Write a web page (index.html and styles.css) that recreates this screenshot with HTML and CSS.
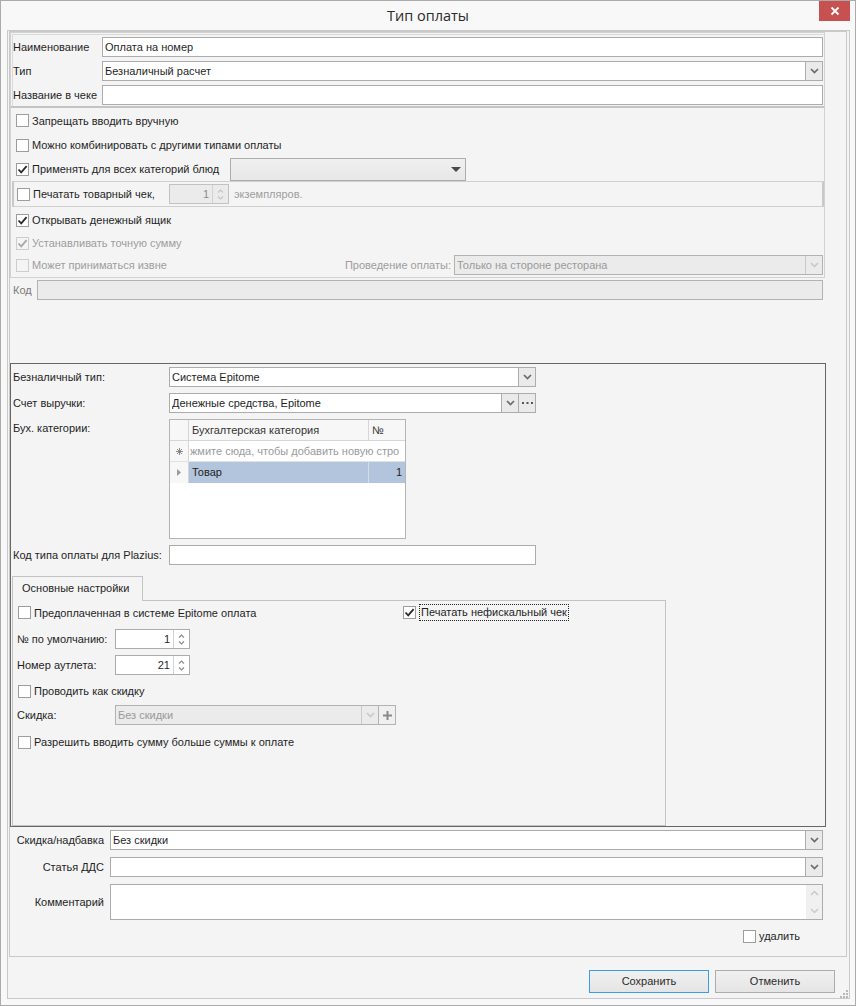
FILE: index.html
```html
<!DOCTYPE html>
<html lang="ru">
<head>
<meta charset="utf-8">
<title>Тип оплаты</title>
<link rel="stylesheet" href="styles.css">
</head>
<body>
<div class="window">
  <div class="titlebar">
    <div class="title">Тип оплаты</div>
    <div class="close"><svg width="10" height="10" viewBox="0 0 10 10"><path d="M1.5 1.5L8.5 8.5M8.5 1.5L1.5 8.5" stroke="#fff" stroke-width="1.8"/></svg></div>
  </div>
  <div class="frame">
    <div class="scroll">
      <div class="grpA">
        <div class="frow"><span class="flabel">Наименование</span><div class="input w721"><span>Оплата на номер</span></div></div>
        <div class="frow"><span class="flabel">Тип</span><div class="input combo w721"><span class="val">Безналичный расчет</span><span class="dd"><svg width="9" height="6" viewBox="0 0 9 6"><path d="M1 1l3.5 3.5L8 1" fill="none" stroke="#6a6a6a" stroke-width="1.7"/></svg></span></div></div>
        <div class="frow"><span class="flabel">Название в чеке</span><div class="input w721"></div></div>
      </div>

      <div class="grpB">
        <div class="crow h25"><span class="cb"></span><span class="ctext">Запрещать вводить вручную</span></div>
        <div class="crow h24"><span class="cb"></span><span class="ctext">Можно комбинировать с другими типами оплаты</span></div>
        <div class="crow h24"><span class="cb"><svg width="11" height="11" viewBox="0 0 11 11"><path d="M1.5 5.5L4.2 8.3L9.6 2.2" fill="none" stroke="#2a2a2a" stroke-width="1.8"/></svg></span><span class="ctext lbl198">Применять для всех категорий блюд</span><div class="flatcombo"><svg width="10" height="5" viewBox="0 0 10 5"><path d="M0 0H10L5 5Z" fill="#4a4a4a"/></svg></div></div>
        <div class="printbox">
          <span class="cb"></span><span class="ctext lbl136">Печатать товарный чек,</span>
          <div class="spin dis w60"><span class="spinval">1</span><span class="spinbtn"><svg width="7" height="4" viewBox="0 0 7 4"><path d="M1 3.5L3.5 1L6 3.5" fill="none" stroke="#c4c4c4" stroke-width="1.2"/></svg><svg width="7" height="4" viewBox="0 0 7 4"><path d="M1 0.5L3.5 3L6 0.5" fill="none" stroke="#c4c4c4" stroke-width="1.2"/></svg></span></div>
          <span class="gray ml5">экземпляров.</span>
        </div>
        <div class="crow h26"><span class="cb"><svg width="11" height="11" viewBox="0 0 11 11"><path d="M1.5 5.5L4.2 8.3L9.6 2.2" fill="none" stroke="#2a2a2a" stroke-width="1.8"/></svg></span><span class="ctext">Открывать денежный ящик</span></div>
        <div class="crow h20"><span class="cb dis"><svg width="11" height="11" viewBox="0 0 11 11"><path d="M1.5 5.5L4.2 8.3L9.6 2.2" fill="none" stroke="#a8a8a8" stroke-width="1.8"/></svg></span><span class="ctext gray">Устанавливать точную сумму</span></div>
        <div class="crow h24 pr1"><span class="cb dis"></span><span class="ctext gray">Может приниматься извне</span>
          <div class="rightpart"><span class="gray">Проведение оплаты:</span><div class="input combo dis w369"><span class="val">Только на стороне ресторана</span><span class="dd"><svg width="9" height="6" viewBox="0 0 9 6"><path d="M1 1l3.5 3.5L8 1" fill="none" stroke="#cacaca" stroke-width="1.7"/></svg></span></div></div>
        </div>
      </div>

      <div class="coderow"><span class="codelabel">Код</span><div class="input dis w786"></div></div>

      <div class="grpC">
        <div class="frowC mt3"><span class="clabel">Безналичный тип:</span><div class="input combo w367"><span class="val">Система Epitome</span><span class="dd"><svg width="9" height="6" viewBox="0 0 9 6"><path d="M1 1l3.5 3.5L8 1" fill="none" stroke="#6a6a6a" stroke-width="1.7"/></svg></span></div></div>
        <div class="frowC mt6"><span class="clabel">Счет выручки:</span><div class="input combo w367"><span class="val">Денежные средства, Epitome</span><span class="dd"><svg width="9" height="6" viewBox="0 0 9 6"><path d="M1 1l3.5 3.5L8 1" fill="none" stroke="#6a6a6a" stroke-width="1.7"/></svg></span><span class="dd2"><svg width="11" height="3" viewBox="0 0 11 3"><rect x="0" y="0" width="2" height="2" fill="#555"/><rect x="4.5" y="0" width="2" height="2" fill="#555"/><rect x="9" y="0" width="2" height="2" fill="#555"/></svg></span></div></div>
        <div class="gridrow mt6"><span class="clabel top">Бух. категории:</span>
          <div class="grid">
            <div class="grow ghead"><span class="rh"></span><span class="c1">Бухгалтерская категория</span><span class="c2">№</span></div>
            <div class="grow gnew"><span class="rh"><svg width="7" height="7" viewBox="0 0 7 7"><path d="M3.5 0V7M0 3.5H7M1 1L6 6M6 1L1 6" stroke="#8a8a8a" stroke-width="1"/></svg></span><span class="cnew">жмите сюда, чтобы добавить новую стро</span></div>
            <div class="grow gsel"><span class="rh"><svg width="4" height="7" viewBox="0 0 4 7"><path d="M0 0L4 3.5L0 7Z" fill="#9a9a9a"/></svg></span><span class="c1">Товар</span><span class="c2 num">1</span></div>
          </div>
        </div>
        <div class="frowC mt6"><span class="clabel">Код типа оплаты для Plazius:</span><div class="input w367"></div></div>

        <div class="tabs"><div class="tab">Основные настройки</div></div>
        <div class="tabpanel">
          <div class="prow mt3">
            <div class="pleft"><span class="cb"></span><span class="ctext">Предоплаченная в системе Epitome оплата</span></div>
            <span class="cb"><svg width="11" height="11" viewBox="0 0 11 11"><path d="M1.5 5.5L4.2 8.3L9.6 2.2" fill="none" stroke="#2a2a2a" stroke-width="1.8"/></svg></span><span class="focus">Печатать нефискальный чек</span>
          </div>
          <div class="lrow mt8"><span class="plabel">№ по умолчанию:</span>
            <div class="spin w75"><span class="spinval">1</span><span class="spinbtn"><svg width="7" height="4" viewBox="0 0 7 4"><path d="M1 3.5L3.5 1L6 3.5" fill="none" stroke="#8c8c8c" stroke-width="1.2"/></svg><svg width="7" height="4" viewBox="0 0 7 4"><path d="M1 0.5L3.5 3L6 0.5" fill="none" stroke="#8c8c8c" stroke-width="1.2"/></svg></span></div>
          </div>
          <div class="lrow mt6"><span class="plabel">Номер аутлета:</span>
            <div class="spin w75"><span class="spinval">21</span><span class="spinbtn"><svg width="7" height="4" viewBox="0 0 7 4"><path d="M1 3.5L3.5 1L6 3.5" fill="none" stroke="#8c8c8c" stroke-width="1.2"/></svg><svg width="7" height="4" viewBox="0 0 7 4"><path d="M1 0.5L3.5 3L6 0.5" fill="none" stroke="#8c8c8c" stroke-width="1.2"/></svg></span></div>
          </div>
          <div class="cbrow mt6"><span class="cb"></span><span class="ctext">Проводить как скидку</span></div>
          <div class="lrow mt4"><span class="plabel">Скидка:</span>
            <div class="input combo dis w281"><span class="val">Без скидки</span><span class="dd"><svg width="9" height="6" viewBox="0 0 9 6"><path d="M1 1l3.5 3.5L8 1" fill="none" stroke="#cacaca" stroke-width="1.7"/></svg></span><span class="dd2"><svg width="9" height="9" viewBox="0 0 9 9"><path d="M4.5 0V9M0 4.5H9" stroke="#8a8a8a" stroke-width="2"/></svg></span></div>
          </div>
          <div class="cbrow mt7"><span class="cb"></span><span class="ctext">Разрешить вводить сумму больше суммы к оплате</span></div>
        </div>
      </div>

      <div class="bottom">
        <div class="brow"><span class="blabel">Скидка/надбавка</span><div class="input combo w713"><span class="val">Без скидки</span><span class="dd"><svg width="9" height="6" viewBox="0 0 9 6"><path d="M1 1l3.5 3.5L8 1" fill="none" stroke="#6a6a6a" stroke-width="1.7"/></svg></span></div></div>
        <div class="brow mt7"><span class="blabel">Статья ДДС</span><div class="input combo w713"><span class="val"></span><span class="dd"><svg width="9" height="6" viewBox="0 0 9 6"><path d="M1 1l3.5 3.5L8 1" fill="none" stroke="#6a6a6a" stroke-width="1.7"/></svg></span></div></div>
        <div class="brow mt7"><span class="blabel">Комментарий</span><div class="memo w713"><span class="memobar"><svg width="9" height="6" viewBox="0 0 9 6"><path d="M1 5l3.5-3.5L8 5" fill="none" stroke="#c8c8c8" stroke-width="1.4"/></svg><svg width="9" height="6" viewBox="0 0 9 6"><path d="M1 1l3.5 3.5L8 1" fill="none" stroke="#c8c8c8" stroke-width="1.4"/></svg></span></div></div>
        <div class="delrow"><span class="cb"></span><span class="ctext">удалить</span></div>
      </div>
    </div>
    <div class="buttons">
      <div class="btn default">Сохранить</div>
      <div class="btn">Отменить</div>
    </div>
    <div class="grip"><svg width="9" height="9" viewBox="0 0 9 9"><rect x="7" y="1" width="2" height="2" fill="#b8b8b8"/><rect x="4" y="4" width="2" height="2" fill="#b8b8b8"/><rect x="7" y="4" width="2" height="2" fill="#b8b8b8"/><rect x="1" y="7" width="2" height="2" fill="#b8b8b8"/><rect x="4" y="7" width="2" height="2" fill="#b8b8b8"/><rect x="7" y="7" width="2" height="2" fill="#b8b8b8"/></svg></div>
  </div>
</div>
</body>
</html>
```

FILE: styles.css
```css
* { box-sizing: border-box; }
html, body { margin: 0; padding: 0; }
body {
  width: 856px; height: 1006px; overflow: hidden;
  background: #f7f7f7;
  font-family: "Liberation Sans", Arial, sans-serif;
  font-size: 11px; color: #1f1f1f;
}
.window {
  width: 856px; height: 1006px;
  border: 1px solid #ababab;
  background: #f8f8f8;
  display: flex; flex-direction: column;
}
.titlebar { height: 29px; flex: none; display: grid; grid-template-columns: 1fr auto 1fr; }
.title {
  grid-column: 2;
  font-family: "Open Sans", "Noto Sans", sans-serif;
  font-size: 14.5px; line-height: 30px; color: #2b2b2b;
}
.close {
  grid-column: 3; justify-self: end;
  width: 31px; height: 20px; margin-right: 5px;
  background: #c75050;
  display: flex; align-items: center; justify-content: center;
}
.frame {
  position: relative;
  margin-left: 6px; width: 843px; height: 969px; flex: none;
  border: 1px solid #c9c9c9; background: #f4f4f4;
  display: flex; flex-direction: column;
}
.scroll {
  margin-left: 1px; width: 838px; height: 926px; flex: none;
  border: 1px solid #c9c9c9;
  display: flex; flex-direction: column;
}

/* generic controls */
.input {
  height: 20px; flex: none;
  border: 1px solid #acacac; background: #fff;
  display: flex; align-items: center;
  padding-left: 2px; white-space: nowrap; overflow: hidden;
}
.input.dis { background: #ebebeb; color: #9a9a9a; border-color: #b2b2b2; }
.combo .val { flex: 1; overflow: hidden; }
.dd {
  width: 17px; align-self: stretch; flex: none;
  border-left: 1px solid #acacac; background: #eaeaea;
  display: flex; align-items: center; justify-content: center;
}
.dis .dd { background: #ebebeb; border-left-color: #cacaca; }
.dd2 {
  width: 17px; align-self: stretch; flex: none;
  border-left: 1px solid #acacac; background: #eaeaea;
  display: flex; align-items: center; justify-content: center;
}
.dis .dd2 { background: #f0f0f0; border-left-color: #b2b2b2; }
.w721 { width: 721px; }
.w369 { width: 369px; }
.w786 { width: 786px; }
.w367 { width: 367px; }
.w281 { width: 281px; }
.w713 { width: 713px; }
.w75 { width: 75px; }
.w60 { width: 60px; }

.cb {
  width: 13px; height: 13px; flex: none;
  border: 1px solid #9d9d9d; background: #fff;
  display: flex; align-items: center; justify-content: center;
}
.cb.dis { border-color: #cdcdcd; background: #f4f4f4; }
.ctext { margin-left: 3px; white-space: nowrap; }
.gray { color: #9d9d9d; white-space: nowrap; }
.ml5 { margin-left: 5px; }
.mt3 { margin-top: 3px; }
.mt4 { margin-top: 4px; }
.mt6 { margin-top: 6px; }
.mt7 { margin-top: 7px; }
.mt8 { margin-top: 8px; }

.spin {
  height: 20px; flex: none;
  border: 1px solid #acacac; background: #fff;
  display: flex;
}
.spin.dis { background: #ebebeb; border-color: #c2c2c2; color: #8a8a8a; }
.spinval { flex: 1; text-align: right; padding-right: 3px; line-height: 18px; }
.spinbtn {
  width: 16px; flex: none;
  border-left: 1px solid #d2d2d2;
  display: flex; flex-direction: column; align-items: center; justify-content: space-around;
  padding: 2px 0;
}

/* group A */
.grpA {
  width: 815px; height: 76px; flex: none;
  border: 1px solid #d2d2d2; border-bottom: 2px solid #c4c4c4;
  box-shadow: inset 1px 1px 0 #f4f4f4, inset 2px 2px 0 #dadada;
  padding: 4px 0 1px 2px;
  display: flex; flex-direction: column; gap: 4px;
}
.frow { display: flex; align-items: center; height: 20px; }
.flabel { width: 89px; flex: none; white-space: nowrap; }

/* group B */
.grpB {
  width: 815px; height: 170px; flex: none;
  border: 1px solid #d2d2d2; border-top: none;
  display: flex; flex-direction: column;
}
.crow { display: flex; align-items: center; padding-left: 5px; flex: none; }
.h20 { height: 20px; }
.h24 { height: 24px; }
.h25 { height: 25px; }
.h26 { height: 26px; }
.pr1 { padding-right: 1px; }
.lbl198 { width: 198px; flex: none; }
.lbl136 { width: 136px; flex: none; }
.flatcombo {
  width: 236px; height: 23px; flex: none;
  border: 1px solid #adadad;
  background: linear-gradient(#f0f0f0, #e7e7e7);
  display: flex; align-items: center; justify-content: flex-end;
  padding-right: 4px;
}
.printbox {
  margin-left: 1px; width: 812px; height: 26px; flex: none;
  border: 1px solid #d0d0d0; border-left: 2px solid #c8c8c8; border-right: 2px solid #c8c8c8;
  display: flex; align-items: center; padding-left: 3px;
}
.rightpart { margin-left: auto; display: flex; align-items: center; gap: 3px; }

/* code row */
.coderow { display: flex; align-items: center; padding: 2px 0 0 3px; height: 22px; flex: none; }
.codelabel { width: 24px; flex: none; color: #7a7a7a; }

/* group C */
.grpC {
  width: 816px; height: 464px; flex: none; margin-top: 63px;
  border: 1px solid #666;
  display: flex; flex-direction: column;
}
.frowC { display: flex; align-items: center; height: 20px; padding-left: 2px; flex: none; }
.clabel { width: 156px; flex: none; white-space: nowrap; }
.clabel.top { align-self: flex-start; padding-top: 3px; }
.gridrow { display: flex; padding-left: 2px; height: 120px; flex: none; }
.grid {
  width: 237px; height: 120px; flex: none;
  border: 1px solid #b4b4b4; background: #fff;
  display: flex; flex-direction: column;
}
.grow { display: flex; height: 21px; flex: none; }
.rh {
  width: 19px; flex: none;
  border-right: 1px solid #d6d6d6; background: #f7f7f7;
  display: flex; align-items: center; justify-content: center;
}
.c1 { width: 180px; flex: none; border-right: 1px solid #d6d6d6; padding-left: 3px; line-height: 20px; white-space: nowrap; }
.c2 { flex: 1; padding-left: 3px; line-height: 20px; }
.ghead { background: #f7f7f7; border-bottom: 1px solid #d6d6d6; color: #333; }
.gnew { border-bottom: 1px solid #e2e2e2; }
.cnew { flex: 1; overflow: hidden; white-space: nowrap; color: #9a9a9a; line-height: 20px; padding-left: 1px; }
.gsel .c1, .gsel .c2 { background: #b2c5dd; line-height: 21px; }
.gsel .c1 { border-right-color: #d4dce8; }
.gsel .c2.num { text-align: right; padding-right: 3px; }
.tabs { display: flex; height: 24px; margin-top: 11px; flex: none; }
.tab {
  position: relative; z-index: 1;
  margin-left: 1px; width: 131px; height: 25px;
  border: 1px solid #c3c3c3; border-bottom: none; background: #f4f4f4;
  padding-left: 9px; line-height: 23px; white-space: nowrap;
}
.tabpanel {
  margin-left: 1px; width: 654px; height: 226px; flex: none;
  border: 1px solid #c3c3c3;
  display: flex; flex-direction: column;
}
.prow { display: flex; align-items: center; height: 17px; padding-left: 5px; flex: none; }
.pleft { width: 385px; flex: none; display: flex; align-items: center; }
.focus { margin-left: 3px; border: 1px dotted #222; padding: 0 1px; line-height: 15px; white-space: nowrap; }
.lrow { display: flex; align-items: center; height: 20px; padding-left: 4px; flex: none; }
.plabel { width: 98px; flex: none; white-space: nowrap; }
.cbrow { display: flex; align-items: center; height: 20px; padding-left: 5px; flex: none; }

/* bottom */
.bottom { display: flex; flex-direction: column; padding-top: 3px; flex: none; }
.brow { display: flex; align-items: center; padding-left: 3px; flex: none; }
.blabel { width: 91px; flex: none; margin-right: 6px; text-align: right; white-space: nowrap; }
.memo {
  height: 36px; flex: none;
  border: 1px solid #acacac; background: #fff;
  display: flex; justify-content: flex-end;
}
.memobar {
  width: 16px; background: #f0f0f0;
  display: flex; flex-direction: column; align-items: center; justify-content: space-between;
  padding: 5px 0;
}
.delrow { display: flex; align-items: center; height: 20px; margin-top: 6px; padding-left: 733px; flex: none; }

/* buttons */
.buttons { display: flex; justify-content: flex-end; gap: 6px; padding: 13px 14px 0 0; }
.btn {
  width: 120px; height: 23px;
  border: 1px solid #acacac;
  background: linear-gradient(#f0f0f0, #e5e5e5);
  text-align: center; line-height: 21px; color: #2a2a2a;
}
.btn.default { border-color: #3c9af0; }
.grip { position: absolute; right: 1px; bottom: 1px; width: 9px; height: 9px; }
```
